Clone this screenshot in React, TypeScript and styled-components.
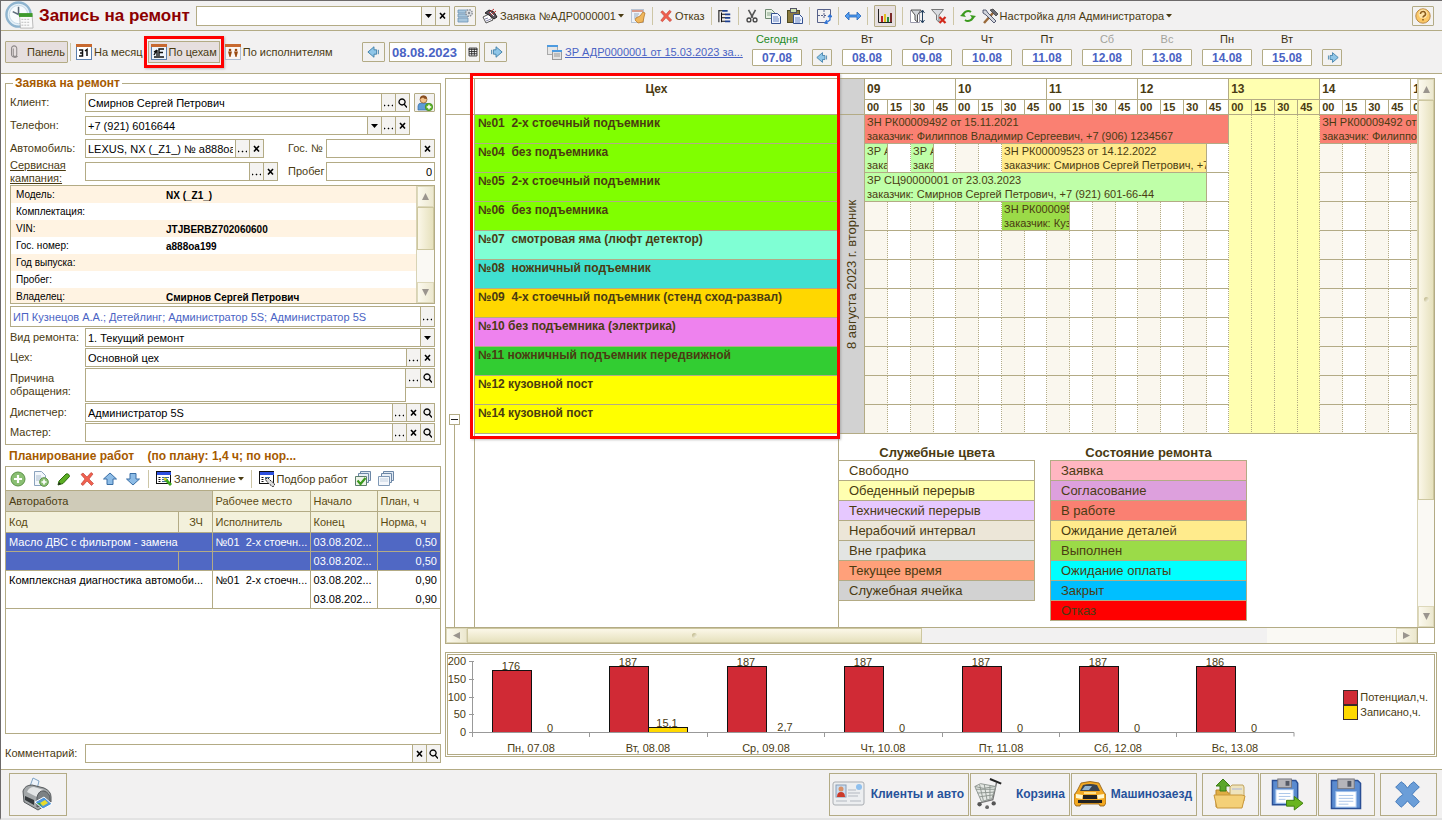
import React from 'react';
import styled, { createGlobalStyle } from 'styled-components';

const line = '#b3ab85';
const brown = '#4a3b12';
const blue = '#4a63c4';
const panel = '#f2f1f1';

const GlobalStyle = createGlobalStyle`
  * { box-sizing: border-box; }
  body { margin: 0; background: #fff; }
  body, button, input, select, textarea {
    font-family: "Liberation Sans", Arial, sans-serif;
    font-size: 11px;
    color: ${brown};
  }
  button { padding: 0; cursor: pointer; }
  svg { display: block; flex: none; }
`;

const Page = styled.div`
  min-height: 100vh;
  display: flex;
  flex-direction: column;
  border-top: 1px solid #6d6a6a;
  border-left: 1px solid #6d6a6a;
  border-bottom: 2px solid #e3e3e3;
`;

const TopBar = styled.header`
  display: flex;
  align-items: center;
  height: 30px;
  padding: 0 8px 0 4px;
  background: ${panel};
  border-bottom: 1px solid ${line};
  white-space: nowrap;
`;

const Title = styled.h1`
  margin: 0 6px 0 5px;
  width: 151px;
  font-size: 17px;
  line-height: 20px;
  color: #8c0000;
`;

const Tools = styled.div`
  display: flex;
  align-items: center;
  gap: 6px;
  flex: 1;
  margin-left: 4px;
`;

const Tool = styled.button`
  display: flex;
  align-items: center;
  gap: 2px;
  height: 22px;
  border: 0;
  background: transparent;
  white-space: nowrap;
`;

const Framed = styled.button<{ $w?: number; $h?: number; $on?: boolean }>`
  display: flex;
  align-items: center;
  justify-content: center;
  gap: 5px;
  width: ${p => (p.$w ? `${p.$w}px` : 'auto')};
  height: ${p => p.$h ?? 20}px;
  flex: none;
  border: 1px solid ${line};
  border-radius: 1px;
  background: ${p => (p.$on ? '#e6dfdf' : '#f3f2f1')};
  white-space: nowrap;
`;

const Sep = styled.span`
  width: 1px;
  height: 18px;
  background: #cdc6a6;
`;

const NavBar = styled.nav`
  display: flex;
  align-items: center;
  height: 43px;
  padding-left: 4px;
  background: ${panel};
  border-bottom: 1px solid ${line};
  white-space: nowrap;
`;

const Views = styled.div`
  display: flex;
  align-items: center;
  gap: 2px;
  width: 357px;
`;

const ViewButton = styled.button<{ $on?: boolean }>`
  position: relative;
  display: flex;
  align-items: center;
  gap: 2px;
  height: 22px;
  padding: 0 2px;
  border: 1px solid ${p => (p.$on ? line : 'transparent')};
  background: ${p => (p.$on ? '#e6dfdf' : 'transparent')};
  white-space: nowrap;
`;

const ViewMark = styled.span`
  position: absolute;
  inset: -6px -5px;
  border: 3px solid #f00;
  box-shadow: 1px 1px 2px #8888;
`;

const DateNav = styled.div`
  display: flex;
  align-items: center;
  gap: 4px;
  width: 184px;
`;

const OrderLink = styled.a`
  display: flex;
  align-items: center;
  gap: 3px;
  width: 206px;
  color: ${blue};
`;

const Days = styled.div`
  display: flex;
  align-items: flex-end;
  align-self: flex-start;
  gap: 10px;
`;

const Day = styled.div`
  display: flex;
  flex-direction: column;
  align-items: center;
  gap: 2px;
`;

const DayName = styled.span<{ $color: string }>`
  line-height: 16px;
  color: ${p => p.$color};
`;

const DayButton = styled.button`
  width: 50px;
  height: 17px;
  border: 1px solid ${line};
  border-radius: 1px;
  background: #fff;
  font-size: 12px;
  font-weight: bold;
  color: ${blue};
`;

const Main = styled.main`
  flex: 1;
  display: grid;
  grid-template-columns: 436px minmax(0, 1fr);
  gap: 4px;
  padding: 3px 5px 0 4px;
  background: #fff;
`;

const Left = styled.section`
  display: flex;
  flex-direction: column;
  padding-bottom: 6px;
`;

const FormBox = styled.fieldset`
  margin: 0;
  padding: 4px 5px 2px 4px;
  border: 1px solid ${line};
  min-width: 0;
`;

const FormTitle = styled.legend`
  margin-left: 3px;
  padding: 0 2px;
  font-size: 12px;
  line-height: 12px;
  font-weight: bold;
  color: #a65a00;
`;

const Row = styled.div<{ $gap?: number; $h?: number }>`
  display: flex;
  align-items: center;
  height: ${p => p.$h ?? 19}px;
  margin-bottom: ${p => p.$gap ?? 1}px;
`;

const SpreadRow = styled(Row)`
  justify-content: space-between;
`;

const RowPart = styled.div`
  display: flex;
  align-items: center;
`;

const Label = styled.label<{ $link?: boolean; $w?: number }>`
  flex: none;
  width: ${p => p.$w ?? 75}px;
  line-height: 13px;
  text-decoration: ${p => (p.$link ? 'underline' : 'none')};
`;

const Field = styled.span<{ $w?: number; $h?: number }>`
  display: flex;
  align-items: stretch;
  flex: ${p => (p.$w ? 'none' : '1')};
  width: ${p => (p.$w ? `${p.$w}px` : 'auto')};
  min-width: 0;
  height: ${p => p.$h ?? 19}px;
  border: 1px solid ${line};
  background: #fff;
`;

const Input = styled.input<{ $color?: string; $bold?: boolean; $right?: boolean }>`
  flex: 1;
  min-width: 0;
  width: 100%;
  border: 0;
  padding: 0 2px;
  background: transparent;
  outline: 0;
  color: ${p => p.$color ?? '#000'};
  font-weight: ${p => (p.$bold ? 'bold' : 'normal')};
  font-size: ${p => (p.$bold ? 13 : 11)}px;
  text-align: ${p => (p.$right ? 'right' : 'left')};
`;

const Select = styled.select`
  flex: 1;
  border: 0;
  padding: 0 2px;
  appearance: none;
  background: transparent;
  color: #000;
`;

const FieldButton = styled.button`
  display: flex;
  align-items: center;
  justify-content: center;
  width: 14px;
  flex: none;
  border: 0;
  border-left: 1px solid ${line};
  background: #f4f3f1;
`;

const Reason = styled.div`
  display: flex;
  align-items: flex-start;
  flex: 1;
`;

const ReasonText = styled.textarea`
  flex: 1;
  height: 34px;
  border: 1px solid ${line};
  resize: none;
  outline: 0;
`;

const ReasonButtons = styled.div`
  display: flex;
  height: 20px;
  border: 1px solid ${line};
  border-left: 0;
  & > button:first-child { border-left: 0; }
`;

const CarInfo = styled.div`
  display: flex;
  height: 119px;
  margin-bottom: 2px;
  border: 1px solid ${line};
  overflow: hidden;
`;

const CarTable = styled.table`
  flex: 1;
  border-collapse: collapse;
  font-size: 10px;
  color: #000;
  display: block;
  & tbody { display: block; }
  & tr { display: flex; height: 17px; align-items: center; }
  & tr:nth-child(odd) { background: #fff3e2; }
  & th { width: 155px; padding: 0 0 0 5px; text-align: left; font-weight: normal; }
  & td { padding: 1px 0 0; font-weight: bold; }
`;

const VBar = styled.div<{ $w?: number }>`
  display: flex;
  flex-direction: column;
  width: ${p => p.$w ?? 17}px;
  flex: none;
  border-left: 1px solid #d8d3b5;
  background: #faf9f4;
`;

const BarButton = styled.button<{ $wide?: boolean }>`
  display: flex;
  align-items: center;
  justify-content: center;
  flex: none;
  width: ${p => (p.$wide ? '21px' : 'auto')};
  height: ${p => (p.$wide ? 'auto' : '21px')};
  border: 1px solid #ddd8ba;
  background: linear-gradient(90deg, #fbf9ee, #ece8cf);
`;

const Thumb = styled.span<{ $grow: number; $dir?: string; $grip?: boolean }>`
  display: flex;
  align-items: center;
  justify-content: center;
  flex: ${p => p.$grow} 1 0;
  border: 1px solid #cdc79f;
  background: linear-gradient(${p => p.$dir ?? '90deg'}, #fbf7e8, #e6e1bd);
  &::after {
    content: '';
    width: ${p => (p.$grip ? 5 : 0)}px;
    height: 5px;
    border-radius: 50%;
    background: linear-gradient(135deg, #b5ad7c, #fffdf0);
  }
`;

const Track = styled.span<{ $grow: number; $dim?: boolean }>`
  flex: ${p => p.$grow} 1 0;
  background: ${p => (p.$dim ? '#f2f1f1' : '#faf9f4')};
`;

const WorksTitle = styled.h2`
  margin: 0;
  padding: 2px 4px 0;
  font-size: 12px;
  line-height: 19px;
  color: #a65a00;
  white-space: pre;
`;

const Works = styled.div`
  flex: 1;
  border: 1px solid ${line};
`;

const WorksTools = styled.div`
  display: flex;
  align-items: center;
  gap: 7px;
  height: 23px;
  padding-left: 4px;
`;

const WorksTable = styled.table`
  width: 100%;
  table-layout: fixed;
  border-collapse: collapse;
  & th, & td {
    height: 19px;
    padding: 0 1px 0 3px;
    border: 1px solid ${line};
    text-align: left;
    font-weight: normal;
    white-space: pre;
  }
  & th { height: 21px; background: #f3f1dc; color: #5a4a12; }
  & th:first-child, & td:first-child { border-left: 0; }
  & th:last-child, & td:last-child { border-right: 0; }
`;

const SortedHead = styled.th`
  && { background: #cfcbb8; color: ${brown}; }
`;

const CenterHead = styled.th`
  && { text-align: center; }
`;

const WorkRow = styled.tr<{ $selected?: boolean; $first?: boolean }>`
  background: ${p => (p.$selected ? '#5068c4' : '#fff')};
  color: ${p => (p.$selected ? '#fff' : '#000')};
  & > td {
    ${p => (!p.$selected && p.$first ? 'border-bottom-color: transparent;' : '')}
    ${p => (!p.$selected && !p.$first ? 'border-top-color: transparent;' : '')}
  }
  & > td:last-child { text-align: right; padding-right: 3px; }
`;

const Comment = styled.div`
  display: flex;
  align-items: center;
  margin-top: 10px;
`;

const Right = styled.section`
  display: flex;
  flex-direction: column;
  min-width: 0;
  padding: 1px 0 12px;
  gap: 8px;
`;

const Schedule = styled.div`
  flex: 1;
  display: flex;
  flex-direction: column;
  border: 1px solid ${line};
  margin-right: 2px;
`;

const ScheduleBody = styled.div`
  flex: 1;
  display: grid;
  grid-template-columns: 28px 365px minmax(0, 1fr) 17px;
`;

const Tree = styled.div`
  display: flex;
  flex-direction: column;
`;

const TreeHead = styled.div`
  height: 36px;
  border-bottom: 1px solid ${line};
`;

const TreeRows = styled.div`
  height: 299px;
`;

const TreeToggle = styled.button`
  width: 11px;
  height: 11px;
  margin-left: 3px;
  border: 1px solid ${line};
  background: #fff;
  line-height: 8px;
`;

const TreeLine = styled.div`
  flex: 1;
  margin-left: 8px;
  border-left: 1px solid ${line};
`;

const Shops = styled.div`
  border: 1px solid ${line};
  border-width: 0 1px;
`;

const ShopsTable = styled.table`
  position: relative;
  display: block;
  font-size: 12px;
  font-weight: bold;
  & thead, & tbody, & tr { display: block; }
  & th { display: block; height: 36px; padding-top: 3px; line-height: 15px; border-bottom: 1px solid ${line}; }
`;

const Shop = styled.td<{ $color: string }>`
  display: block;
  height: 29px;
  padding: 1px 3px;
  line-height: 14px;
  border-bottom: 1px solid ${line};
  background: ${p => p.$color};
  white-space: pre;
`;

const ShopsMark = styled.caption`
  position: absolute;
  inset: -6px -2px -5px -5px;
  border: 3px solid #f00;
  box-shadow: 1px 1px 2px #8888;
  pointer-events: none;
`;

const Board = styled.div`
  display: flex;
  flex-direction: column;
  min-width: 0;
  overflow: hidden;
`;

const BoardTop = styled.div`
  display: flex;
  overflow: hidden;
`;

const DateColumn = styled.div`
  display: flex;
  flex-direction: column;
  width: 26px;
  flex: none;
  border-right: 1px solid ${line};
  border-bottom: 1px solid ${line};
  background: #d2d2d2;
`;

const DateText = styled.div`
  flex: 1;
  display: flex;
  align-items: center;
  justify-content: center;
  writing-mode: vertical-rl;
  transform: rotate(180deg);
  font-size: 13px;
`;

const TimeTable = styled.table`
  flex: none;
  width: 637px;
  table-layout: fixed;
  border-spacing: 0;
  & th, & td {
    overflow: hidden;
    white-space: nowrap;
    text-align: left;
    padding: 0 2px;
    border-right: 1px solid ${line};
    border-bottom: 1px solid ${line};
  }
`;

const Hour = styled.th<{ $rest?: boolean }>`
  height: 21px;
  font-size: 12px;
  background: ${p => (p.$rest ? '#ffffb0' : '#fff')};
`;

const Quarter = styled.th<{ $rest?: boolean }>`
  height: 15px;
  font-size: 11px;
  line-height: 13px;
  background: ${p => (p.$rest ? '#ffffb0' : '#fff')};
`;

const Slot = styled.td<{ $bg: string; $last?: boolean }>`
  height: 29px;
  && { border-right: 1px dotted ${line}; }
  && { border-bottom-color: ${p => (p.$bg === '#ffffb0' && !p.$last ? '#ffffb0' : line)}; }
  background: ${p => p.$bg};
`;

const Booking = styled.td<{ $bg: string }>`
  height: 29px;
  line-height: 14px;
  background: ${p => p.$bg};
`;

const Legends = styled.div`
  display: flex;
  align-items: flex-start;
  gap: 15px;
  padding-top: 11px;
`;

const Legend = styled.table<{ $first?: boolean }>`
  width: ${p => (p.$first ? 196 : 197)}px;
  border-spacing: 0;
  font-size: 13px;
  & caption { font-size: 13px; font-weight: bold; line-height: 15px; }
  & td {
    height: 20px;
    padding: 0 10px;
    line-height: 16px;
    border: 1px solid ${line};
    border-top: 0;
    ${p => (p.$first ? 'border-left: 0;' : '')}
  }
  & tr:first-child td { height: 21px; border-top: 1px solid ${line}; }
`;

const LegendCell = styled.td<{ $bg: string }>`
  background: ${p => p.$bg};
`;

const HBar = styled.div`
  display: flex;
  height: 16px;
  border-top: 1px solid ${line};
`;

const Corner = styled.span`
  width: 17px;
  border-left: 1px solid ${line};
`;

const ChartBox = styled.div`
  display: flex;
  align-items: center;
  justify-content: space-between;
  height: 105px;
  border: 3px double ${line};
`;

const ChartLegend = styled.ul`
  margin: 0;
  padding: 0 6px 0 0;
  list-style: none;
`;

const ChartKey = styled.li<{ $c: string }>`
  display: flex;
  align-items: center;
  gap: 2px;
  height: 15px;
  &::before {
    content: '';
    width: 13px;
    height: 13px;
    border: 1px solid #3a2a2a;
    background: ${p => p.$c};
  }
`;

const Footer = styled.footer`
  display: flex;
  align-items: center;
  gap: 1px;
  height: 49px;
  padding: 0 5px 0 8px;
  background: ${panel};
  border-top: 1px solid ${line};
`;

const Big = styled.button<{ $w: number; $push?: boolean; $gap?: boolean }>`
  display: flex;
  align-items: center;
  justify-content: ${p => (p.$w > 60 ? 'space-between' : 'center')};
  width: ${p => p.$w}px;
  height: 43px;
  padding: 0 4px 0 2px;
  margin-left: ${p => (p.$push ? 'auto' : p.$gap ? '4px' : '0')};
  border: 1px solid ${line};
  background: #f3f2f2;
  font-size: 12px;
  font-weight: bold;
  color: #27529b;
  white-space: nowrap;
`;

/* ---------- icons ---------- */

const art: Record<string, React.ReactNode> = {
  stamp: (<>
    <path d="M1 9l6-3 4 6-7 3z" fill="#fff" stroke="#555" />
    <path d="M3 11l3-1M4 13l5-2" stroke="#88a" />
    <path d="M3 5l4-3 5 2 3 5-3 2-5-4z" fill="#5b5560" stroke="#222" />
    <path d="M7 5l5-4M9 7l5-4" stroke="#b33" /><path d="M8 4l4 4" stroke="#eee" />
  </>),
  hand: (<>
    <rect x="1.5" y="1.5" width="12" height="13" fill="#eef3fa" stroke="#b8c4d4" />
    <path d="M2 2h11v2H2z" fill="#d99a8a" /><path d="M4 6h5M4 8h4M4 10h3" stroke="#9ab" />
    <path d="M6 10l4-2 3-4 2 1-1 4-1 5-5 1-3-3z" fill="#f0b75c" stroke="#b97a2c" strokeWidth=".8" />
  </>),
  redx: (<path d="M2 3.500L4 2l4 4 4-4.500L14 3l-4 5 4.500 4.500L12.500 14.500 8 10l-4 4.500L2 13l4-5z" fill="#f0604f" stroke="#b8392c" strokeWidth=".6" />),
  tree: (<>
    <path d="M1 1v14M1 2h5M4 4v11M4 6h4M4 10h4M4 14h4" stroke="#111" fill="none" strokeWidth="1.200" />
    <path d="M5 1h6v2H5zM8 5h6v2H8zM8 9h6v2H8zM8 13h6v2H8z" fill="#1c3f8f" />
  </>),
  cut: (<>
    <path d="M4 1l5 9M12 1L7 10" stroke="#555" strokeWidth="1.800" />
    <circle cx="4.500" cy="12.500" r="2.200" fill="none" stroke="#444" strokeWidth="1.500" />
    <circle cx="11.500" cy="12.500" r="2.200" fill="none" stroke="#444" strokeWidth="1.500" />
  </>),
  copy: (<>
    <path d="M.5 1.500h6l3 3v6h-9z" fill="#e9f3e4" stroke="#6f8a72" /><path d="M2 5h5M2 7h5" stroke="#8aa58c" />
    <path d="M6.500 5.500h6l3 3v7h-9z" fill="#eef4ff" stroke="#33508f" /><path d="M8 9h5M8 11h6M8 13h6" stroke="#6a86c0" />
  </>),
  paste: (<>
    <rect x=".5" y="2.500" width="12" height="12" fill="#8a7a3e" stroke="#4f4a22" /><rect x="3.500" y=".5" width="6" height="4" fill="#cfe0b0" stroke="#556" />
    <path d="M6.500 6.500h6l3 3v6h-9z" fill="#eef4ff" stroke="#33508f" /><path d="M8 10h5M8 12h6M8 14h5" stroke="#6a86c0" />
  </>),
  split: (<>
    <path d="M1.500 1.500h13v8M9 14.500H1.500v-13" fill="none" stroke="#56618a" />
    <path d="M8 2v9M2 7.500h9" fill="none" stroke="#56618a" strokeDasharray="2 1" />
    <path d="M14 8v4l-4 3M12 9l2-2 2 2M11 12l-2 3 3 1" fill="none" stroke="#2f72d4" strokeWidth="1.300" />
  </>),
  lr: (<path d="M0 8l4-4v3h8V4l4 4-4 4V9H4v3z" fill="#4f9bf0" stroke="#2465b8" strokeWidth=".8" />),
  chart: (<>
    <path d="M1.500 1v13.500H15" stroke="#222" fill="none" />
    <path d="M4 8h2v6H4z" fill="#b22" /><path d="M7 6h2v8H7z" fill="#e0c020" /><path d="M10 9h2v5h-2z" fill="#2a8a3a" /><path d="M13 5h2v9h-2z" fill="#7a2a2a" />
  </>),
  filter: (<>
    <path d="M1.500 2.500h9v12h-9z" fill="#fff" stroke="#99a" /><path d="M2 2h10L8.500 7v7L6 12V7z" fill="#d3d6dc" stroke="#555" />
    <path d="M13.500 3v11M11.500 5l2-3 2 3M11.500 12l2 3 2-3" stroke="#26415f" fill="none" />
  </>),
  filterx: (<>
    <path d="M.5 1.500h12L8 7v7L5.500 12V7z" fill="#d9dbe0" stroke="#777" />
    <path d="M8.500 9l6 6M14.500 9l-6 6" stroke="#d22a1c" strokeWidth="2.200" />
  </>),
  refresh: (<>
    <path d="M3 8a5 5 0 0 1 8-4M13 8a5 5 0 0 1-8 4" fill="none" stroke="#3b9a1e" strokeWidth="2" />
    <path d="M0 8l3-3 3 4zM16 8l-3 3-3-4z" fill="#3b9a1e" />
  </>),
  tools: (<>
    <path d="M2 15L11 5" stroke="#9a6a3a" strokeWidth="2.500" /><path d="M8 2l3-1 5 5-2 2z" fill="#6a6a72" stroke="#333" strokeWidth=".7" />
    <path d="M1 2l3 0 2 3 8 8-2 2-8-8-3-2z" fill="#d3d6dd" stroke="#333a55" strokeWidth=".8" />
  </>),
  help: (<>
    <circle cx="8" cy="8" r="7.200" fill="#fbc765" stroke="#b98a4a" /><circle cx="8" cy="6" r="4.500" fill="#fde3a8" />
    <path d="M5.500 6a2.500 2.300 0 1 1 3.500 2q-1 .6-1 1.500M8 11v1.500" stroke="#8a5a1a" strokeWidth="1.500" fill="none" />
  </>),
  listgear: (<>
    <path d="M1 2h10v3H1zM1 6h10v3H1zM1 10h10v4H1z" fill="#a9c7dd" stroke="#6b93b5" strokeWidth=".8" />
    <circle cx="12" cy="5" r="3.200" fill="#dfe2e6" stroke="#8a8f96" strokeDasharray="1.500 1" strokeWidth="1.400" /><circle cx="12" cy="5" r="1.200" fill="#8a8f96" />
  </>),
  clip: (<path d="M6 4v7a2 2 0 0 0 4 0V4a3 3 0 0 0-6 0v7.500a4 4 0 0 0 7 1" fill="none" stroke="#8f8a8a" strokeWidth="1.200" />),
  cal31: (<>
    <rect x=".5" y="1.500" width="15" height="14" fill="#fff" stroke="#5a7fae" /><path d="M0 0h16v3H0z" fill="#c8692f" />
    <path d="M3 6h3.500v6H3M4 9h2.500M9 7l2-1.500V12" stroke="#111" strokeWidth="1.500" fill="none" />
  </>),
  calshop: (<>
    <rect x=".5" y="1.500" width="15" height="14" fill="#eef4fb" stroke="#5a7fae" /><path d="M0 0h16v3H0z" fill="#c8692f" />
    <path d="M3 13h10M8 12V5h5M8 8.500h4M3 11l3-5M3 8l3-2M6 6v6" stroke="#111" strokeWidth="1.400" fill="none" />
  </>),
  calman: (<>
    <rect x=".5" y="1.500" width="15" height="14" fill="#fbf6f2" stroke="#aebdd0" /><path d="M0 0h16v3H0z" fill="#c8692f" />
    <circle cx="5" cy="6" r="1.300" fill="#9a4a10" /><circle cx="11" cy="6" r="1.300" fill="#9a4a10" />
    <path d="M3 7.500h4L5.500 13h-1zM9 7.500h4L11.500 13h-1z" fill="#9a4a10" />
  </>),
  aleft: (<path d="M1 8l7-6v3.500h3v5H8V14zM13 5.500v5" fill="#8fc6e8" stroke="#3a7ba6" />),
  aright: (<path d="M15 8L8 2v3.500H5v5h3V14zM3 5.500v5" fill="#8fc6e8" stroke="#3a7ba6" />),
  cal: (<path d="M3.500 3.500h9v9h-9zM3 5h10M3.500 7.500h9M3.500 10h9M6.500 4v8M9.500 4v8" fill="#fff" stroke="#222" />),
  docs: (<>
    <rect x="1.500" y="1.500" width="10" height="9" fill="#e6e6e6" stroke="#a9a9a9" /><path d="M1 1h11v2H1z" fill="#4d9be0" />
    <rect x="6.500" y="7.500" width="9" height="8" fill="#e2e2e2" stroke="#999" /><path d="M6 6h10v2H6z" fill="#4d9be0" /><path d="M8 10h6M8 12h6" stroke="#999" />
  </>),
  user: (<>
    <path d="M1 15V11q0-3 4-3h3q4 0 4 3v4z" fill="#5d9bd6" stroke="#3a6ea5" strokeWidth=".7" /><circle cx="6.500" cy="4.500" r="3.500" fill="#f3c28a" stroke="#8a5a2a" strokeWidth=".7" /><path d="M3 4q0-4 4-3.500 3 0 3 3.500-3 0-4-1.500z" fill="#8a4f22" />
    <circle cx="12" cy="12" r="3.700" fill="#5fb52c" stroke="#3b8514" strokeWidth=".7" /><path d="M12 9.800v4.400M9.800 12h4.400" stroke="#fff" strokeWidth="1.400" />
  </>),
  add: (<><circle cx="8" cy="8" r="7" fill="#8abf73" stroke="#5c9247" /><path d="M8 4v8M4 8h8" stroke="#fff" strokeWidth="2.200" /></>),
  adddoc: (<>
    <path d="M1.500 .5h7l4 4v10h-11z" fill="#f3f7fb" stroke="#8ba3bd" /><path d="M3 5h5M3 7h6M3 9h4" stroke="#a9bccf" />
    <circle cx="11" cy="11" r="4.300" fill="#8abf73" stroke="#5c9247" /><path d="M11 8.500v5M8.500 11h5" stroke="#fff" strokeWidth="1.600" />
  </>),
  pencil: (<><path d="M2 14l1-4 7-7q3-1 3.500 2.500L7 12.500z" fill="#5cae24" stroke="#2c6e0c" /><path d="M2 14l1-3 2 2z" fill="#222" /></>),
  up: (<path d="M8 2l6.500 6H11v5.500H5V8H1.500z" fill="#8dbce6" stroke="#3a6fa6" />),
  down: (<path d="M8 14L1.500 8H5V2.500h6V8h3.500z" fill="#8dbce6" stroke="#3a6fa6" />),
  fill: (<>
    <rect x=".5" y=".5" width="14" height="12" fill="#fff" stroke="#111" /><path d="M1 1h14v3H1z" fill="#2c4fe0" />
    <path d="M2.500 6.500h2M2.500 8.500h2M2.500 10.500h2" stroke="#111" /><path d="M6 6.500h7M6 8.500h6M6 10.500h4" stroke="#3a6a9a" /><path d="M9 8l6 6" stroke="#3ba81c" strokeWidth="2.800" /><path d="M8 7l2 2" stroke="#e8d020" strokeWidth="2" />
  </>),
  pick: (<>
    <rect x=".5" y=".5" width="14" height="12" fill="#fff" stroke="#111" /><path d="M1 1h14v3H1z" fill="#2c4fe0" />
    <path d="M2.500 6.500h2M2.500 8.500h2M2.500 10.500h2" stroke="#111" /><path d="M6 6.500h5" stroke="#3a6a9a" /><path d="M6 8l3-1 3 3 4 3-2 3-5-4z" fill="#ddd" stroke="#222" strokeDasharray="2 1" />
  </>),
  checks: (<>
    <path d="M5.500 .5h10v9h-10z" fill="#dfe8f2" stroke="#6c87a6" /><path d="M3.500 2.500h10v9h-10z" fill="#e8eef5" stroke="#6c87a6" />
    <path d="M.5 5.500h11v9H.5z" fill="#eef3e8" stroke="#5c7f6c" /><path d="M2.500 9.500l3 3.500 5-6" stroke="#3b9a1e" strokeWidth="2.200" fill="none" />
  </>),
  sheets: (<>
    <path d="M5.500 .5h10v9h-10z" fill="#dfe8f2" stroke="#6c87a6" /><path d="M3.500 2.500h10v9h-10z" fill="#e8eef5" stroke="#6c87a6" />
    <path d="M.5 5.500h11v9H.5z" fill="#f4f7fb" stroke="#7f98b5" /><path d="M2 8h8M2 10h8" stroke="#c3d0df" />
  </>),
  clock: (<>
    <circle cx="14" cy="14" r="12.500" fill="#e6f1f8" stroke="#8fb4cf" strokeWidth="2.500" /><circle cx="14" cy="14" r="9.500" fill="#f7fbfe" stroke="#c5d8e6" />
    <path d="M14 6v8l-6-3" stroke="#5a6b7b" strokeWidth="1.600" fill="none" /><path d="M14 14h8" stroke="#9ab" />
    <path d="M15 14h13l1 14H16z" fill="#fafafa" stroke="#aaa" strokeWidth=".8" /><path d="M14.500 12.500h14v4h-14z" fill="#3e9a2c" />
    <path d="M17 19h9M17 22h9M17 25h9" stroke="#bbb" strokeDasharray="2 1" />
  </>),
  printer: (<>
    <path d="M9 12L13 1l6 3-2 8z" fill="#eef4fb" stroke="#7fa3c4" />
    <path d="M3 14q2-6 9-6l12 3q7 3 7 9v5l-13 8L4 25z" fill="#a3a7a9" stroke="#55595c" />
    <path d="M7 15q2-5 7-5l10 3q-6 2-7 7z" fill="#e3e5e6" /><path d="M17 30V20q2-7 7-6 6 2 6 8v4z" fill="#7c8184" stroke="#55595c" />
    <path d="M5 19l9 4v5l-9-5z" fill="#34383b" /><path d="M15 25l9-5 8 7-9 5z" fill="#4f97dd" stroke="#fff" /><path d="M20 26l5-3 3 3-5 3z" fill="#e8dc2a" /><path d="M17 26h3l2 4z" fill="#3ba83a" />
  </>),
  card: (<>
    <rect x="1" y="5" width="31" height="23" rx="2" fill="#eceef0" stroke="#a9adb2" /><rect x="4" y="8" width="10" height="12" fill="#c9dcf0" stroke="#8a9db5" />
    <circle cx="9" cy="12" r="2.500" fill="#d99066" /><path d="M5 20q0-5 4-5t4 5z" fill="#cc3a2a" /><path d="M16 13h8M16 16h12M16 19h10M4 24h11M18 24h11" stroke="#b3b8c0" /><circle cx="27" cy="10" r="3" fill="#8fc0ee" />
  </>),
  cart: (<>
    <path d="M25 5l-4 18-16 4" fill="none" stroke="#777" strokeWidth="1.500" /><path d="M18 1l12 5" stroke="#222" strokeWidth="2.200" />
    <path d="M2 9l6-3 16 3-4 13-11 3z" fill="#e3e7e3" stroke="#8d948f" /><path d="M3 12l20 0M5 16l17-1M7 20l14-2M7 7l4 17M12 7l3 17M18 8l0 14M2 9l9 2 13-2" stroke="#8d948f" fill="none" />
    <circle cx="7" cy="28" r="2.300" fill="#555" /><circle cx="22" cy="27" r="2.300" fill="#555" /><circle cx="15" cy="31" r="2" fill="#666" />
  </>),
  car: (<>
    <path d="M3 13l4-8q9-3 18 0l4 8 3 4v8l-2 3h-4l-1-2H7l-1 2H2l-2-3v-8z" fill="#f2a822" stroke="#8a5a14" strokeWidth=".8" /><path d="M6 13l3-6q7-2 14 0l3 6z" fill="#39434f" /><path d="M8 12l3-4h7l-3 4z" fill="#91b5d3" />
    <path d="M2 16l7 1-1 4-6-1zM30 16l-7 1 1 4 6-1z" fill="#fff8cf" /><path d="M9 17h14v4H9zM4 22h24v3H4z" fill="#222" /><path d="M10 15h12" stroke="#ffe08a" strokeWidth="2" />
  </>),
  folder: (<>
    <path d="M3 12h10l2 3h14v14H3z" fill="#e0ae45" stroke="#b98528" /><path d="M17 9l2-2h11l1 2v14H17z" fill="#eee3bd" stroke="#c0a35e" /><path d="M19 11h10" stroke="#ccc" strokeWidth="2" />
    <path d="M1 17h28l3 1-3 12H4z" fill="#f4d078" stroke="#c8963a" /><path d="M10 1l7 7h-4v5H7V8H3z" fill="#5aa62a" stroke="#3a7c14" />
  </>),
  save: (<>
    <path d="M1.500 2.500h27l3 3v26h-30z" fill="#5a8bd0" stroke="#2a4f95" strokeWidth="1.500" /><rect x="8" y="1" width="17" height="10" fill="#b5b5ba" stroke="#77777d" /><path d="M18 3h4v6h-4z" fill="#555a66" />
    <rect x="6" y="14" width="21" height="16" fill="#fff" stroke="#9fc0ea" /><path d="M9 18h15M9 21h15M9 24h15M9 27h10" stroke="#a9c5e8" />
  </>),
  saveexit: (<>
    <path d="M1.500 2.500h24l2 3v22h-26z" fill="#5a8bd0" stroke="#2a4f95" strokeWidth="1.500" /><rect x="7" y="1" width="14" height="9" fill="#b5b5ba" stroke="#77777d" /><path d="M15 3h4v5h-4z" fill="#555a66" />
    <rect x="5" y="12" width="18" height="14" fill="#fff" stroke="#9fc0ea" /><path d="M8 16h12M8 19h12M8 22h7" stroke="#a9c5e8" /><path d="M16 23h8v-4l9 7-9 7v-4h-8z" fill="#69b51e" stroke="#3f7f0c" />
  </>),
  bigx: (<path d="M4 9l6-6q4 2 7 7 3-5 7-7l6 6q-4 3-8 8 5 4 8 8l-6 6q-4-3-7-7-3 4-7 7l-6-6q3-5 8-8-4-5-8-8z" fill="#6b9ed8" stroke="#3f76b8" />),
};

const Ico = ({ n, s = 16, v = 16 }: { n: string; s?: number; v?: number }) => (
  <svg width={s} height={s} viewBox={`0 0 ${v} ${v}`} fill="none" aria-hidden="true">{art[n]}</svg>
);

const marks: Record<string, React.ReactNode> = {
  down: <path d="M1 3h7L4.500 7z" fill="#000" />,
  x: <path d="M2 2l5 5.500M7 2L2 7.500" stroke="#000" strokeWidth="1.600" />,
  dots: <path d="M0 7h1v1H0zM4 7h1v1H4zM8 7h1v1H8z" fill="#000" stroke="#000" strokeWidth=".5" />,
  find: <path d="M4 1a3 3 0 1 0 .1 0zM6 6l3 3.500" stroke="#000" strokeWidth="1.300" fill="none" />,
};

const names: Record<string, string> = { down: 'Список', x: 'Очистить', dots: 'Выбрать', find: 'Открыть' };

const Mark = ({ n }: { n: string }) => (
  <FieldButton type="button" aria-label={names[n]}>
    <svg width="9" height="10" viewBox="0 0 9 10">{marks[n]}</svg>
  </FieldButton>
);

const Caret = () => <svg width="6" height="4" viewBox="0 0 6 4"><path d="M0 0h6L3 3.500z" fill={brown} /></svg>;

const Arrow = ({ d }: { d: 'up' | 'down' | 'left' | 'right' }) => {
  const turn = { up: 0, right: 90, down: 180, left: 270 }[d];
  return <svg width="9" height="9" viewBox="0 0 9 9"><path d="M4.500 1L8 8H1z" fill="#9a958e" transform={`rotate(${turn} 4.500 4.500)`} /></svg>;
};

/* ---------- data ---------- */

const days: [string, string][] = [
  ['Вт', '08.08'], ['Ср', '09.08'], ['Чт', '10.08'], ['Пт', '11.08'],
  ['Сб', '12.08'], ['Вс', '13.08'], ['Пн', '14.08'], ['Вт', '15.08'],
];

const car: [string, string][] = [
  ['Модель:', 'NX (_Z1_)'], ['Комплектация:', ''], ['VIN:', 'JTJBERBZ702060600'],
  ['Гос. номер:', 'а888оа199'], ['Год выпуска:', ''], ['Пробег:', ''],
  ['Владелец:', 'Смирнов Сергей Петрович'],
];

const shops: [string, string][] = [
  ['№01  2-х стоечный подъемник', '#80ff00'],
  ['№04  без подъемника', '#80ff00'],
  ['№05  2-х стоечный подъемник', '#80ff00'],
  ['№06  без подъемника', '#80ff00'],
  ['№07  смотровая яма (люфт детектор)', '#7fffd4'],
  ['№08  ножничный подъемник', '#40e0d0'],
  ['№09  4-х стоечный подъемник (стенд сход-развал)', '#ffd700'],
  ['№10 без подъемника (электрика)', '#ee82ee'],
  ['№11 ножничный подъемник передвижной', '#32cd32'],
  ['№12 кузовной пост', '#ffff00'],
  ['№14 кузовной пост', '#ffff00'],
];

type Event = { row: number; at: number; span: number; bg: string; a: string; b: string };

const events: Event[] = [
  { row: 0, at: 0, span: 16, bg: '#fa8072', a: 'ЗН РК00009492 от 15.11.2021', b: 'заказчик: Филиппов Владимир Сергеевич, +7 (906) 1234567' },
  { row: 0, at: 20, span: 8, bg: '#fa8072', a: 'ЗН РК00009492 от', b: 'заказчик: Филиппов' },
  { row: 1, at: 0, span: 1, bg: '#bfffa8', a: 'ЗР А', b: 'зака' },
  { row: 1, at: 2, span: 1, bg: '#bfffa8', a: 'ЗР А', b: 'зака' },
  { row: 1, at: 6, span: 9, bg: '#ffeb8c', a: 'ЗН РК00009523 от 14.12.2022', b: 'заказчик: Смирнов Сергей Петрович, +7' },
  { row: 2, at: 0, span: 15, bg: '#bfffa8', a: 'ЗР СЦ90000001 от 23.03.2023', b: 'заказчик: Смирнов Сергей Петрович, +7 (921) 601-66-44' },
  { row: 3, at: 6, span: 3, bg: '#9bdb48', a: 'ЗН РК000095', b: 'заказчик: Куз' },
];

const hours = ['09', '10', '11', '12', '13', '14', '15'];
const quarters = ['00', '15', '30', '45'];
const quarterWidths = [23, 23, 23, 22];

const serviceColors: [string, string][] = [
  ['Свободно', '#ffffff'], ['Обеденный перерыв', '#ffffb0'], ['Технический перерыв', '#e6c8ff'],
  ['Нерабочий интервал', '#ece6d8'], ['Вне графика', '#e3e5e3'], ['Текущее время', '#ffa07a'],
  ['Служебная ячейка', '#d2d2d2'],
];

const stateColors: [string, string][] = [
  ['Заявка', '#ffb6c1'], ['Согласование', '#dda0dd'], ['В работе', '#fa8072'],
  ['Ожидание деталей', '#ffeb8c'], ['Выполнен', '#9bdb48'], ['Ожидание оплаты', '#00ffff'],
  ['Закрыт', '#00bfff'], ['Отказ', '#ff0000'],
];

const load: [string, number, number][] = [
  ['Пн, 07.08', 176, 0], ['Вт, 08.08', 187, 15.1], ['Ср, 09.08', 187, 2.7], ['Чт, 10.08', 187, 0],
  ['Пт, 11.08', 187, 0], ['Сб, 12.08', 187, 0], ['Вс, 13.08', 186, 0],
];

/* ---------- parts ---------- */

const slotColor = (i: number) => (i >= 16 && i < 20 ? '#ffffb0' : i % 2 ? '#fff' : '#faf7ee');

const boardRow = (row: number) => {
  const cells: React.ReactNode[] = [];
  let i = 0;
  while (i < 28) {
    const e = events.find(x => x.row === row && x.at === i);
    if (e) {
      cells.push(<Booking key={i} colSpan={e.span} $bg={e.bg}>{e.a}<br />{e.b}</Booking>);
      i += e.span;
    } else {
      cells.push(<Slot key={i} $bg={slotColor(i)} $last={row === shops.length - 1} />);
      i += 1;
    }
  }
  return <tr key={row}>{cells}</tr>;
};

const LoadChart = () => {
  const left = 24;
  const base = 77;
  const step = 117.4;
  const scale = 71 / 200;
  return (
    <svg width="860" height="99" fontSize="11" fill={brown} role="img" aria-label="Загрузка">
      {[0, 50, 100, 150, 200].map(v => (
        <g key={v}>
          <path d={`M${left - 3} ${Math.round(base - v * scale) + 0.5}h5`} stroke="#999" />
          <text x={left - 6} y={base - v * scale + 4} textAnchor="end">{v}</text>
        </g>
      ))}
      {load.map(([label, a, b], i) => {
        const x = Math.round(left + step * i);
        const show = (n: number) => String(n).replace('.', ',');
        return (
          <g key={label}>
            <rect x={x + 20.5} y={Math.round(base - a * scale) + 0.5} width="39" height={Math.round(a * scale)} fill="#d02a35" stroke="#111" />
            {b > 5 && <rect x={x + 59.5} y={Math.round(base - b * scale) + 0.5} width="39" height={Math.round(b * scale)} fill="#ffd900" stroke="#111" />}
            <text x={x + 39} y={base - a * scale} textAnchor="middle">{show(a)}</text>
            <text x={x + 78} y={base - b * scale} textAnchor="middle">{show(b)}</text>
            <text x={x + 59} y={base + 20} textAnchor="middle">{label}</text>
            <path d={`M${x + 0.5} ${base}v5`} stroke="#999" />
          </g>
        );
      })}
      <path d={`M${left + 0.5} 6V${base + 0.5}H${Math.round(left + step * 7)}v4`} stroke="#999" fill="none" />
    </svg>
  );
};

export default function App() {
  return (
    <Page>
      <GlobalStyle />
      <TopBar>
        <Ico n="clock" s={29} v={30} />
        <Title>Запись на ремонт</Title>
        <Field $w={254} $h={20}>
          <Input aria-label="Поиск" />
          <Mark n="down" /><Mark n="x" />
        </Field>
        <Tools>
          <Framed $w={22} aria-label="Настройка списка"><Ico n="listgear" /></Framed>
          <Tool><Ico n="stamp" />Заявка №АДР0000001<Caret /></Tool>
          <Tool aria-label="Записать"><Ico n="hand" /></Tool>
          <Sep />
          <Tool><Ico n="redx" s={14} />Отказ</Tool>
          <Sep />
          <Tool aria-label="Структура"><Ico n="tree" s={14} /></Tool>
          <Sep />
          <Tool aria-label="Вырезать"><Ico n="cut" s={14} /></Tool>
          <Tool aria-label="Копировать"><Ico n="copy" /></Tool>
          <Tool aria-label="Вставить"><Ico n="paste" /></Tool>
          <Sep />
          <Tool aria-label="Разбить"><Ico n="split" /></Tool>
          <Sep />
          <Tool aria-label="По ширине"><Ico n="lr" /></Tool>
          <Sep />
          <Framed $w={22} $h={22} $on aria-label="Диаграмма"><Ico n="chart" /></Framed>
          <Sep />
          <Tool aria-label="Отбор"><Ico n="filter" /></Tool>
          <Tool aria-label="Снять отбор"><Ico n="filterx" /></Tool>
          <Sep />
          <Tool aria-label="Обновить"><Ico n="refresh" /></Tool>
          <Tool><Ico n="tools" />Настройка для Администратора<Caret /></Tool>
        </Tools>
        <Framed $w={22} aria-label="Справка"><Ico n="help" /></Framed>
      </TopBar>

      <NavBar>
        <Views>
          <Framed $w={63} $h={22} $on><Ico n="clip" s={14} />Панель</Framed>
          <Sep />
          <ViewButton><Ico n="cal31" />На месяц</ViewButton>
          <ViewButton $on><Ico n="calshop" />По цехам<ViewMark /></ViewButton>
          <ViewButton><Ico n="calman" />По исполнителям</ViewButton>
        </Views>
        <DateNav>
          <Framed $w={23} aria-label="Назад"><Ico n="aleft" s={14} /></Framed>
          <Field $w={91} $h={20}>
            <Input $bold $color={blue} aria-label="Дата" defaultValue="08.08.2023" />
            <FieldButton type="button" aria-label="Календарь"><Ico n="cal" s={14} /></FieldButton>
          </Field>
          <Framed $w={23} aria-label="Вперёд"><Ico n="aright" s={14} /></Framed>
        </DateNav>
        <OrderLink href="#order"><Ico n="docs" />ЗР АДР0000001 от 15.03.2023 за...</OrderLink>
        <Days>
          <Day><DayName $color="#1f8a1f">Сегодня</DayName><DayButton>07.08</DayButton></Day>
          <Framed $w={20} $h={17} aria-label="Предыдущий день"><Ico n="aleft" s={13} /></Framed>
          {days.map(([name, date]) => (
            <Day key={date}>
              <DayName $color={name === 'Сб' || name === 'Вс' ? '#a3a39b' : '#3a2f10'}>{name}</DayName>
              <DayButton>{date}</DayButton>
            </Day>
          ))}
          <Framed $w={20} $h={17} aria-label="Следующий день"><Ico n="aright" s={13} /></Framed>
        </Days>
      </NavBar>

      <Main>
        <Left>
          <FormBox>
            <FormTitle>Заявка на ремонт</FormTitle>
            <SpreadRow $gap={4}>
              <RowPart>
                <Label htmlFor="client">Клиент:</Label>
                <Field $w={325}><Input id="client" defaultValue="Смирнов Сергей Петрович" /><Mark n="dots" /><Mark n="find" /></Field>
              </RowPart>
              <Framed $w={21} $h={19} aria-label="Новый клиент"><Ico n="user" /></Framed>
            </SpreadRow>
            <Row $gap={4}>
              <Label htmlFor="phone">Телефон:</Label>
              <Field $w={325}><Input id="phone" defaultValue="+7 (921) 6016644" /><Mark n="down" /><Mark n="dots" /><Mark n="x" /></Field>
            </Row>
            <SpreadRow $gap={4}>
              <RowPart>
                <Label htmlFor="car">Автомобиль:</Label>
                <Field $w={179}><Input id="car" defaultValue="LEXUS, NX (_Z1_) № а888оа199" /><Mark n="dots" /><Mark n="x" /></Field>
              </RowPart>
              <RowPart>
                <Label $w={38} htmlFor="plate">Гос. №</Label>
                <Field $w={109}><Input id="plate" /><Mark n="x" /></Field>
              </RowPart>
            </SpreadRow>
            <SpreadRow $gap={4}>
              <RowPart>
                <Label $link htmlFor="campaign">Сервисная кампания:</Label>
                <Field $w={193}><Input id="campaign" /><Mark n="dots" /><Mark n="x" /></Field>
              </RowPart>
              <RowPart>
                <Label $w={38} htmlFor="run">Пробег</Label>
                <Field $w={109}><Input id="run" $right defaultValue="0" /></Field>
              </RowPart>
            </SpreadRow>
            <CarInfo>
              <CarTable>
                <tbody>{car.map(([k, v]) => <tr key={k}><th scope="row">{k}</th><td>{v}</td></tr>)}</tbody>
              </CarTable>
              <VBar $w={18}>
                <BarButton aria-label="Вверх"><Arrow d="up" /></BarButton>
                <Thumb $grow={42} />
                <Track $grow={33} />
                <BarButton aria-label="Вниз"><Arrow d="down" /></BarButton>
              </VBar>
            </CarInfo>
            <Row $h={21}>
              <Field $h={21}><Input aria-label="Подразделение" $color={blue} defaultValue="ИП Кузнецов А.А.; Детейлинг; Администратор 5S; Администратор 5S" /><Mark n="dots" /></Field>
            </Row>
            <Row>
              <Label htmlFor="kind">Вид ремонта:</Label>
              <Field><Select id="kind"><option>1. Текущий ремонт</option></Select><Mark n="down" /></Field>
            </Row>
            <Row>
              <Label htmlFor="dept">Цех:</Label>
              <Field><Input id="dept" defaultValue="Основной цех" /><Mark n="dots" /><Mark n="x" /></Field>
            </Row>
            <Row $h={34}>
              <Label htmlFor="reason">Причина обращения:</Label>
              <Reason>
                <ReasonText id="reason" />
                <ReasonButtons><Mark n="dots" /><Mark n="find" /></ReasonButtons>
              </Reason>
            </Row>
            <Row>
              <Label htmlFor="disp">Диспетчер:</Label>
              <Field><Input id="disp" defaultValue="Администратор 5S" /><Mark n="dots" /><Mark n="x" /><Mark n="find" /></Field>
            </Row>
            <Row $gap={0}>
              <Label htmlFor="master">Мастер:</Label>
              <Field><Input id="master" /><Mark n="dots" /><Mark n="x" /><Mark n="find" /></Field>
            </Row>
          </FormBox>

          <WorksTitle>{'Планирование работ    (по плану: 1,4 ч; по нор...'}</WorksTitle>
          <Works>
            <WorksTools>
              <Tool aria-label="Добавить"><Ico n="add" /></Tool>
              <Tool aria-label="Скопировать"><Ico n="adddoc" /></Tool>
              <Tool aria-label="Изменить"><Ico n="pencil" /></Tool>
              <Tool aria-label="Удалить"><Ico n="redx" /></Tool>
              <Tool aria-label="Выше"><Ico n="up" /></Tool>
              <Tool aria-label="Ниже"><Ico n="down" /></Tool>
              <Sep />
              <Tool><Ico n="fill" />Заполнение<Caret /></Tool>
              <Sep />
              <Tool><Ico n="pick" />Подбор работ</Tool>
              <Tool aria-label="Отметить все"><Ico n="checks" /></Tool>
              <Tool aria-label="Снять отметки"><Ico n="sheets" /></Tool>
            </WorksTools>
            <WorksTable>
              <colgroup><col width="172" /><col width="34" /><col width="98" /><col width="67" /><col /></colgroup>
              <thead>
                <tr><SortedHead colSpan={2}>Авторабота</SortedHead><th>Рабочее место</th><th>Начало</th><th>План, ч</th></tr>
                <tr><th>Код</th><CenterHead>ЗЧ</CenterHead><th>Исполнитель</th><th>Конец</th><th>Норма, ч</th></tr>
              </thead>
              <tbody>
                <WorkRow $selected $first><td colSpan={2}>Масло ДВС с фильтром - замена</td><td>№01  2-х стоечн...</td><td>03.08.202...</td><td>0,50</td></WorkRow>
                <WorkRow $selected><td /><td /><td /><td>03.08.202...</td><td>0,50</td></WorkRow>
                <WorkRow $first><td colSpan={2}>Комплексная диагностика автомоби...</td><td>№01  2-х стоечн...</td><td>03.08.202...</td><td>0,90</td></WorkRow>
                <WorkRow><td colSpan={2} /><td /><td>03.08.202...</td><td>0,90</td></WorkRow>
              </tbody>
            </WorksTable>
          </Works>
          <Comment>
            <Label htmlFor="comment" $w={80}>Комментарий:</Label>
            <Field><Input id="comment" /><Mark n="x" /><Mark n="find" /></Field>
          </Comment>
        </Left>

        <Right>
          <Schedule>
            <ScheduleBody>
              <Tree>
                <TreeHead />
                <TreeRows />
                <TreeToggle aria-label="Свернуть">
                  <svg width="9" height="9"><path d="M1 4.500h7" stroke="#222" /></svg>
                </TreeToggle>
                <TreeLine />
              </Tree>
              <Shops>
                <ShopsTable cellSpacing={0} cellPadding={0}>
                  <ShopsMark />
                  <thead><tr><th>Цех</th></tr></thead>
                  <tbody>{shops.map(([name, color]) => <tr key={name}><Shop $color={color}>{name}</Shop></tr>)}</tbody>
                </ShopsTable>
              </Shops>
              <Board>
                <BoardTop>
                  <DateColumn>
                    <TreeHead />
                    <DateText>8 августа 2023 г. вторник</DateText>
                  </DateColumn>
                  <TimeTable>
                    <colgroup>{hours.map(h => quarterWidths.map((w, i) => <col key={h + i} width={w} />))}</colgroup>
                    <thead>
                      <tr>{hours.map(h => <Hour key={h} colSpan={4} $rest={h === '13'}>{h}</Hour>)}</tr>
                      <tr>{hours.map(h => quarters.map(q => <Quarter key={h + q} $rest={h === '13'}>{q}</Quarter>))}</tr>
                    </thead>
                    <tbody>{shops.map((_, i) => boardRow(i))}</tbody>
                  </TimeTable>
                </BoardTop>
                <Legends>
                  <Legend $first>
                    <caption>Служебные цвета</caption>
                    <tbody>{serviceColors.map(([t, c]) => <tr key={t}><LegendCell $bg={c}>{t}</LegendCell></tr>)}</tbody>
                  </Legend>
                  <Legend>
                    <caption>Состояние ремонта</caption>
                    <tbody>{stateColors.map(([t, c]) => <tr key={t}><LegendCell $bg={c}>{t}</LegendCell></tr>)}</tbody>
                  </Legend>
                </Legends>
              </Board>
              <VBar>
                <BarButton aria-label="Вверх"><Arrow d="up" /></BarButton>
                <Thumb $grow={400} $grip />
                <Track $grow={107} />
                <BarButton aria-label="Вниз"><Arrow d="down" /></BarButton>
              </VBar>
            </ScheduleBody>
            <HBar>
              <BarButton $wide aria-label="Влево"><Arrow d="left" /></BarButton>
              <Thumb $grow={455} $dir="180deg" $grip />
              <Track $grow={346} $dim />
              <Track $grow={130} />
              <BarButton $wide aria-label="Вправо"><Arrow d="right" /></BarButton>
              <Corner />
            </HBar>
          </Schedule>
          <ChartBox>
            <LoadChart />
            <ChartLegend>
              <ChartKey $c="#d02a35">Потенциал,ч.</ChartKey>
              <ChartKey $c="#ffd900">Записано,ч.</ChartKey>
            </ChartLegend>
          </ChartBox>
        </Right>
      </Main>

      <Footer>
        <Big $w={58} aria-label="Печать"><Ico n="printer" s={34} v={34} /></Big>
        <Big $w={140} $push><Ico n="card" s={34} v={34} />Клиенты и авто</Big>
        <Big $w={100}><Ico n="cart" s={32} v={34} />Корзина</Big>
        <Big $w={126}><Ico n="car" s={32} v={32} />Машинозаезд</Big>
        <Big $w={57} $gap aria-label="Открыть"><Ico n="folder" s={33} v={33} /></Big>
        <Big $w={57} aria-label="Записать и закрыть"><Ico n="saveexit" s={33} v={34} /></Big>
        <Big $w={57} aria-label="Сохранить"><Ico n="save" s={32} v={33} /></Big>
        <Big $w={57} $gap aria-label="Закрыть"><Ico n="bigx" s={31} v={34} /></Big>
      </Footer>
    </Page>
  );
}
